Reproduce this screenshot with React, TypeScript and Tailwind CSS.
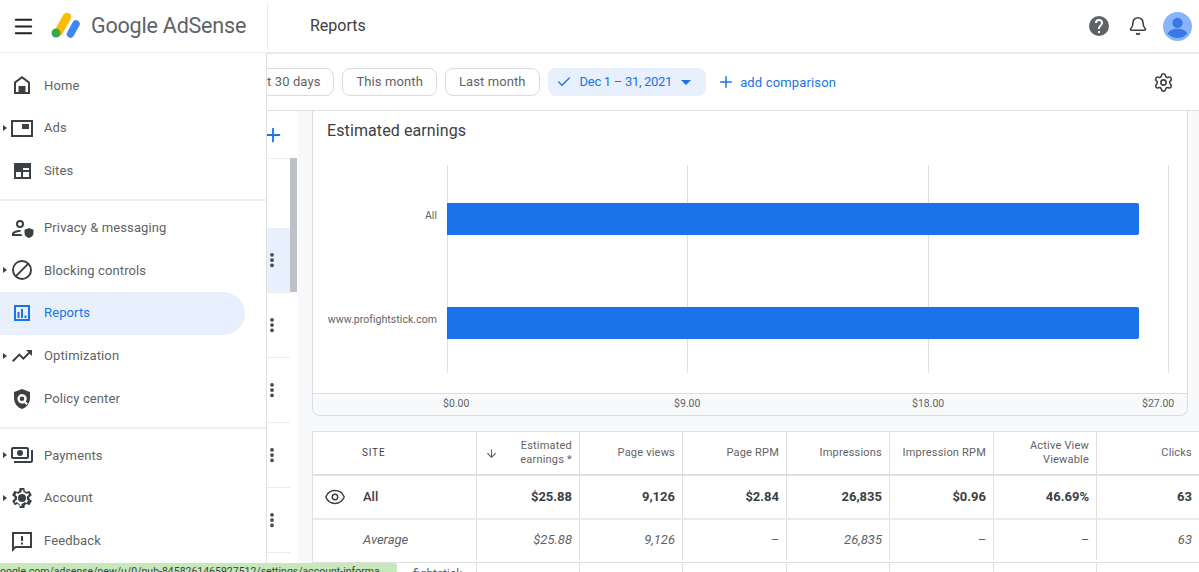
import { Bell, Check, Plus, MoreVertical, ArrowDown, Eye, Settings, Menu } from 'lucide-react';
import type { ReactNode } from 'react';

const font = "font-['Roboto',sans-serif]";

function NavIcon({ children, color = '#3c4043' }: { children: ReactNode; color?: string }) {
    return (
        <svg viewBox="0 0 24 24" width="24" height="24" fill={color}>
            {children}
        </svg>
    );
}

const icons: Record<string, ReactNode> = {
    Home: <path fillRule="evenodd" d="M12 3 4 9v12h16V9l-8-6zm0 2.500 6 4.500v9h-2.500v-6h-7v6H6v-9l6-4.500z" />,
    Ads: <path d="M1 4h22v17H1V4zm2 2v13h18V6H3zm9 2h7v5h-7V8z" />,
    Sites: <path d="M4 4h17v16H4V4zm2 5v9h5v-5H6V9zm7 4v5h6v-5h-6zm0-4v2h6V9h-6z" />,
    'Privacy & messaging': (
        <path d="M10 12a4 4 0 1 0 0-8 4 4 0 0 0 0 8zm0-6a2 2 0 1 1 0 4 2 2 0 0 1 0-4zM4 18c.200-.700 3.300-2 6-2 .300-.700.600-1.300 1-1.900-3.200-.300-9 1.200-9 3.900v2h10.300c-.400-.600-.800-1.300-1-2H4zm15-6-4.500 1.700v3c0 2.700 1.900 4.700 4.500 5.300 2.600-.600 4.500-2.600 4.500-5.300v-3L19 12z" />
    ),
    'Blocking controls': (
        <path d="M12 2a10 10 0 1 0 0 20 10 10 0 0 0 0-20zM4 12a8 8 0 0 1 12.900-6.300L5.700 16.900A7.900 7.900 0 0 1 4 12zm8 8a7.900 7.900 0 0 1-4.900-1.700L18.300 7.100A8 8 0 0 1 12 20z" />
    ),
    Reports: <path d="M4 4h16v16H4V4zm2 2v12h12V6H6zm1.500 5h2v6h-2v-6zM11 8h2v9h-2V8zm3.500 6.500h2V17h-2v-2.500z" />,
    Optimization: <path d="m16 6 2.300 2.300-4.900 4.900-4-4L2 16.600 3.400 18l6-6 4 4 6.300-6.300L22 12V6h-6z" />,
    'Policy center': (
        <path fillRule="evenodd" d="M12 2 4 5v6.100c0 5 3.400 9.700 8 10.900 4.600-1.200 8-5.900 8-10.900V5l-8-3zm0 5a4.800 4.800 0 0 1 3.900 7.600l1.900 1.900-1.400 1.400-1.900-1.900A4.800 4.800 0 1 1 12 7zm0 2.500a2.300 2.300 0 1 0 0 4.600 2.300 2.300 0 0 0 0-4.600z" />
    ),
    Payments: (
        <path d="M19 14V6c0-1.100-.900-2-2-2H3c-1.100 0-2 .900-2 2v8c0 1.100.900 2 2 2h14c1.100 0 2-.900 2-2zm-2 0H3V6h14v8zm-7-7a3 3 0 1 0 0 6 3 3 0 0 0 0-6zm13 0v11c0 1.100-.900 2-2 2H4v-2h17V7h2z" />
    ),
    Account: (
        <path d="M19.400 13c.100-.300.100-.700.100-1s0-.700-.100-1l2.100-1.600c.200-.100.200-.400.100-.600l-2-3.500c-.100-.200-.400-.300-.600-.200l-2.500 1c-.500-.400-1.100-.700-1.700-1l-.400-2.700c0-.200-.200-.400-.400-.400h-4c-.200 0-.400.200-.500.400l-.400 2.700c-.600.300-1.200.600-1.700 1l-2.500-1c-.200-.100-.500 0-.600.200l-2 3.500c-.100.200-.100.500.100.600L4.600 11c-.100.300-.100.700-.100 1s0 .700.100 1l-2.100 1.600c-.200.100-.200.400-.100.600l2 3.500c.100.200.400.300.600.200l2.500-1c.500.400 1.100.700 1.700 1l.400 2.700c.100.200.300.400.500.400h4c.200 0 .400-.200.400-.400l.400-2.700c.600-.300 1.200-.600 1.700-1l2.500 1c.200.100.500 0 .600-.200l2-3.500c.100-.200.100-.500-.100-.600L19.400 13zm-2 1.700.400.300-1.100 1.900-2.100-.800-.800.600c-.500.400-.900.600-1.300.800l-.900.400-.300 2.100h-1.400l-.300-2.100-.900-.400c-.500-.200-.900-.400-1.300-.800l-.800-.600-2.100.800L5.300 15l1.800-1.400-.100-1c0-.300-.100-.500-.100-.600s0-.300.100-.600l.100-1L5.300 9l1.100-1.900 2.100.800.800-.600c.500-.400.900-.600 1.300-.800l.9-.400.300-2.100h1.400l.3 2.100.900.400c.500.200.900.400 1.300.800l.8.600 2.100-.800L18.700 9l-1.800 1.400.100 1c0 .300.100.500.100.600s0 .300-.100.600l-.1 1 1.500 1.100zM12 8a4 4 0 1 0 0 8 4 4 0 0 0 0-8z" />
    ),
    Feedback: <path d="M2 3h20v16H6l-4 4V3zm2 2v13.200L5.200 17H20V5H4zm7 2h2v5h-2V7zm0 6.500h2v2h-2v-2z" />,
};

const navGroups = [
    [
        { label: 'Home' },
        { label: 'Ads', arrow: true },
        { label: 'Sites' },
    ],
    [
        { label: 'Privacy & messaging' },
        { label: 'Blocking controls', arrow: true },
        { label: 'Reports', active: true },
        { label: 'Optimization', arrow: true },
        { label: 'Policy center' },
    ],
    [
        { label: 'Payments', arrow: true },
        { label: 'Account', arrow: true },
        { label: 'Feedback' },
    ],
];

function NavRow({ label, arrow, active }: { label: string; arrow?: boolean; active?: boolean }) {
    return (
        <div className={`relative flex h-[42.75px] w-[245px] items-center rounded-r-full pl-[10px] ${active ? 'bg-[#e8f0fe]' : ''}`}>
            {arrow && <span className="absolute left-[3px] h-0 w-0 border-y-[3px] border-l-[4px] border-y-transparent border-l-[#3c4043]" />}
            <NavIcon color={active ? '#1a73e8' : '#3c4043'}>{icons[label]}</NavIcon>
            <span className={`ml-[10px] text-[13px] tracking-[0.12px] ${active ? 'text-[#1a73e8]' : 'text-[#5f6368]'}`}>{label}</span>
        </div>
    );
}

function Sidebar() {
    return (
        <aside className="absolute left-0 top-[53px] z-10 h-[519px] w-[267px] border-r border-[#e0e0e0] bg-white pt-[11px]">
            {navGroups.map((group, i) => (
                <div key={i} className={i < 2 ? 'mb-[5px] border-b-2 border-[#eceef0] pb-[7px]' : ''}>
                    {group.map((item) => (
                        <NavRow key={item.label} {...item} />
                    ))}
                </div>
            ))}
        </aside>
    );
}

function Header() {
    return (
        <header className="flex h-[54px] shrink-0 items-center border-b-2 border-[#e8eaed] bg-white">
            <div className="flex w-[268px] items-center border-r border-[#e8eaed] py-[9px] pl-[12px]">
                <Menu size={23} strokeWidth={2.2} className="text-[#202124]" />
                <svg viewBox="0 0 30 28" width="30" height="28" className="ml-[16px]">
                    <path d="M16 5 7.500 20" stroke="#fbbc04" strokeWidth="8.500" strokeLinecap="round" />
                    <circle cx="5" cy="21" r="4.500" fill="#34a853" />
                    <path d="M25 12 19.500 22" stroke="#4285f4" strokeWidth="7.500" strokeLinecap="round" />
                </svg>
                <span className="ml-[10px] text-[21.5px] leading-[28px] tracking-[-0.2px] text-[#5f6368]">Google AdSense</span>
            </div>
            <span className="ml-[42px] text-[16px] text-[#3c4043]">Reports</span>
            <div className="ml-auto flex items-center pr-[7px]">
                <svg viewBox="0 0 24 24" width="24" height="24" fill="#5f6368">
                    <path d="M12 2a10 10 0 1 0 0 20 10 10 0 0 0 0-20zm1 17h-2v-2h2v2zm2.100-7.700-.900.900c-.700.700-1.200 1.300-1.200 2.800h-2v-.500c0-1.100.500-2.100 1.200-2.800l1.200-1.300c.400-.300.600-.800.600-1.400a2 2 0 0 0-4 0H8a4 4 0 0 1 8 0c0 .900-.400 1.700-.900 2.300z" />
                </svg>
                <Bell size={20} strokeWidth={1.9} className="ml-[17px] text-[#3c4043]" />
                <svg viewBox="0 0 28 28" width="29" height="29" className="ml-[15px]">
                    <circle cx="14" cy="14" r="14" fill="#8ab4f8" />
                    <circle cx="14" cy="10.500" r="5" fill="#3b78e7" />
                    <path d="M4.500 21c1.500-3.500 5.500-4.800 9.500-4.800s8 1.300 9.500 4.800a13 13 0 0 1-19 0z" fill="#3b78e7" />
                </svg>
            </div>
        </header>
    );
}

function Chip({ children }: { children: ReactNode }) {
    return (
        <span className="flex h-[28px] items-center rounded-lg border border-[#dadce0] px-[13px] text-[13px] tracking-[0.1px] whitespace-nowrap text-[#5f6368]">
            {children}
        </span>
    );
}

function Toolbar() {
    return (
        <div className="flex h-[57px] shrink-0 items-center gap-[8px] border-b border-[#e0e0e0] bg-white pl-[232px] pr-[25px]">
            <Chip>Last 30 days</Chip>
            <Chip>This month</Chip>
            <Chip>Last month</Chip>
            <span className="flex h-[28px] items-center rounded-lg bg-[#e8f0fe] pl-[8px] pr-[15px] text-[13px] tracking-[-0.3px] whitespace-nowrap text-[#1a73e8]">
                <Check size={16} strokeWidth={2} />
                <span className="ml-[8px]">Dec 1 – 31, 2021</span>
                <span className="ml-[9px] h-0 w-0 border-x-[5px] border-t-[5px] border-x-transparent border-t-[#1a73e8]" />
            </span>
            <Plus size={18} strokeWidth={2} className="ml-[3px] text-[#1a73e8]" />
            <span className="ml-[-3px] mt-[2px] text-[13px] tracking-[0.15px] text-[#1a73e8]">add comparison</span>
            <Settings size={21} strokeWidth={1.8} className="ml-auto text-[#3c4043]" />
        </div>
    );
}

function SiteList() {
    return (
        <div className="relative w-[298px] shrink-0 bg-white">
            <div className="flex h-[48px] items-center justify-end border-b border-[#eeeeee] pr-[14px]">
                <Plus size={22} strokeWidth={2} className="text-[#1a73e8]" />
            </div>
            <div className="h-[69px]" />
            {[true, false, false, false, false, false].map((selected, i) => (
                <div key={i} className={`flex h-[65px] w-[290px] items-center justify-end border-b border-[#e8eaed] pr-[9px] ${selected ? 'bg-[#e8f0fe]' : ''}`}>
                    <MoreVertical size={18} strokeWidth={3} className="text-[#3c4043]" />
                </div>
            ))}
            {/* scrollbar thumb */}
            <span className="absolute right-[1px] top-[47px] h-[134px] w-[7px] bg-[#bdc1c6]" />
        </div>
    );
}

function Bar({ label, top }: { label: string; top: string }) {
    return (
        <div className={`flex h-[32px] items-center ${top}`}>
            <span className="w-[134px] pb-[6px] pr-[10px] text-right text-[10.5px] tracking-[0.05px] whitespace-nowrap text-[#5f6368]">{label}</span>
            <span className="h-[32px] w-[692px] rounded-r-[2px] bg-[#1a73e8]" />
        </div>
    );
}

function Chart() {
    return (
        <section className="h-[305px] w-[876px] rounded-b-lg border border-t-0 border-[#dadce0] bg-white">
            <h2 className="h-[31px] px-[14px] pt-[9px] text-[16px] leading-[22px] tracking-[0.1px] text-[#3c4043]">Estimated earnings</h2>
            <div className="relative h-[251px] pt-[61px]">
                {/* gridlines */}
                <div className="absolute bottom-[20px] left-[134px] top-[23px] flex w-[722px] justify-between">
                    <span className="w-px bg-[#e0e0e0]" />
                    <span className="w-px bg-[#e0e0e0]" />
                    <span className="w-px bg-[#e0e0e0]" />
                    <span className="w-px bg-[#e0e0e0]" />
                </div>
                <div className="relative">
                    <Bar label="All" top="" />
                    <Bar label="www.profightstick.com" top="mt-[72px]" />
                </div>
            </div>
            <div className="relative h-[22px] rounded-b-lg border-t border-[#dadce0] bg-[#f8f9fa] text-[10.5px] leading-[20px] text-[#5f6368]">
                <span className="absolute left-[130px] top-0">$0.00</span>
                <span className="absolute left-[361px] top-0">$9.00</span>
                <span className="absolute left-[599px] top-0">$18.00</span>
                <span className="absolute left-[829px] top-0">$27.00</span>
            </div>
        </section>
    );
}

const columns = [
    { label: ['Page views'], total: '9,126', avg: '9,126', w: 'w-[103px]' },
    { label: ['Page RPM'], total: '$2.84', avg: '–', w: 'w-[104px]' },
    { label: ['Impressions'], total: '26,835', avg: '26,835', w: 'w-[103px]' },
    { label: ['Impression RPM'], total: '$0.96', avg: '–', w: 'w-[104px]' },
    { label: ['Active View', 'Viewable'], total: '46.69%', avg: '–', w: 'w-[103px]' },
    { label: ['Clicks'], total: '63', avg: '63', w: 'flex-1' },
];

function Table() {
    const cell = 'flex items-center justify-end border-r border-[#e0e0e0] pr-[7px] text-right last:border-r-0';
    return (
        <section className="mt-[15px] w-[887px] border-l border-t border-[#e0e0e0] bg-white">
            <div className="flex h-[44px] border-b-2 border-[#e0e0e0] text-[11px] leading-[14px] tracking-[0.2px] text-[#5f6368]">
                <div className="flex w-[164px] items-center border-r border-[#e0e0e0] pl-[49px] text-[10px] tracking-[0.8px] text-[#3c4043]">SITE</div>
                <div className={`${cell} w-[103px]`}>
                    <ArrowDown size={13} className="mr-auto ml-[8px]" />
                    <span>Estimated<br />earnings *</span>
                </div>
                {columns.map((c) => (
                    <div key={c.label[0]} className={`${cell} ${c.w}`}>
                        <span>{c.label.map((l) => <span key={l} className="block">{l}</span>)}</span>
                    </div>
                ))}
            </div>
            <div className="flex h-[44px] border-b-2 border-[#e8eaed] text-[13px] font-bold text-[#3c4043]">
                <div className="flex w-[164px] items-center border-r border-[#e0e0e0] pl-[11px]">
                    <Eye size={22} strokeWidth={1.6} />
                    <span className="ml-[17px] font-medium">All</span>
                </div>
                <div className={`${cell} w-[103px]`}>$25.88</div>
                {columns.map((c) => (
                    <div key={c.label[0]} className={`${cell} ${c.w}`}>{c.total}</div>
                ))}
            </div>
            <div className="flex h-[43px] border-b border-[#e0e0e0] pb-[2px] text-[13px] italic text-[#5f6368]">
                <div className="flex w-[164px] items-center border-r border-[#e0e0e0] pl-[50px]">Average</div>
                <div className={`${cell} w-[103px]`}>$25.88</div>
                {columns.map((c) => (
                    <div key={c.label[0]} className={`${cell} ${c.w}`}>{c.avg}</div>
                ))}
            </div>
            <div className="flex h-[20px]">
                <div className="w-[164px] border-r border-[#e0e0e0] pl-[100px] pt-[2px] text-[12px] whitespace-nowrap text-[#5f6368]">fightstick</div>
                <div className={`${cell} w-[103px]`} />
                {columns.map((c) => (
                    <div key={c.label[0]} className={`${cell} ${c.w}`} />
                ))}
            </div>
        </section>
    );
}

export default function App() {
    return (
        <div className={`relative flex h-[572px] w-[1199px] flex-col overflow-hidden bg-white ${font}`}>
            <Header />
            <Toolbar />
            <div className="flex min-h-0 flex-1">
                <SiteList />
                <main className="flex-1 bg-[#f8f9fa] pl-[14px]">
                    <Chart />
                    <Table />
                </main>
            </div>
            <Sidebar />
            <div className="absolute bottom-0 left-0 z-20 h-[9px] w-[397px] overflow-hidden rounded-tr-[3px] bg-[#c6e8ba] pt-[2px] text-[10.5px] leading-[14px] whitespace-nowrap text-[#3c4043]">
                oogle.com/adsense/new/u/0/pub-8458261465927512/settings/account-informa
            </div>
        </div>
    );
}
